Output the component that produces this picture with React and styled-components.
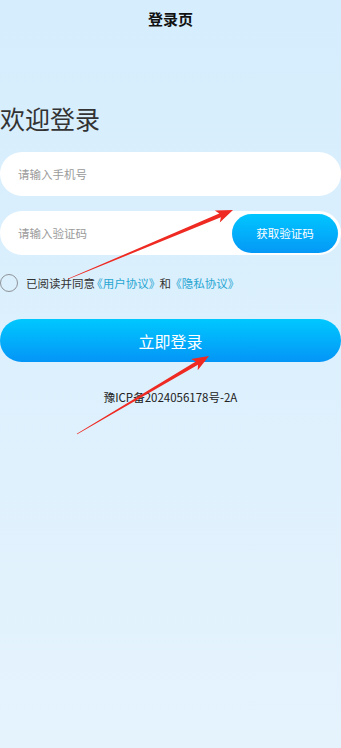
import React from "react";
import styled, { createGlobalStyle } from "styled-components";

const Global = createGlobalStyle`
  html, body { margin: 0; padding: 0; }
  body {
    font-family: "Noto Sans CJK SC", "Noto Sans", sans-serif;
    background: #dff0fd;
  }
  * { box-sizing: border-box; }
`;

const Page = styled.div`
  position: relative;
  width: 341px;
  min-height: 748px;
  background: linear-gradient(180deg, #d5edfd 0%, #dcf0fd 45%, #e5f3fd 100%);
  overflow: hidden;
`;

const Header = styled.div`
  height: 36px;
  display: flex;
  align-items: center;
  justify-content: center;
  font-size: 15px;
  font-weight: 700;
  color: #111;
`;

const Welcome = styled.h1`
  margin: 68px 0 0;
  font-size: 25px;
  line-height: 28px;
  font-weight: 400;
  color: #333;
`;

const Field = styled.div`
  margin-top: ${(p) => p.$mt}px;
  height: 44px;
  border-radius: 22px;
  background: #fff;
  display: flex;
  align-items: center;
  padding-left: 18px;
  padding-right: 3px;
`;

const Input = styled.input`
  flex: 1;
  min-width: 0;
  border: none;
  outline: none;
  background: transparent;
  padding: 0;
  font-family: inherit;
  font-size: 11.5px;
  color: #333;
  &::placeholder { color: #9a9a9a; }
`;

const CodeButton = styled.button`
  width: 106px;
  height: 39px;
  border: none;
  border-radius: 20px;
  background: linear-gradient(180deg, #00c6ff 0%, #0598f6 100%);
  color: #fff;
  font-family: inherit;
  font-size: 11.5px;
  padding: 0;
`;

const Agree = styled.div`
  margin-top: 18px;
  height: 20px;
  display: flex;
  align-items: center;
  font-size: 11.5px;
  color: #333;
`;

const Circle = styled.span`
  width: 18px;
  height: 18px;
  border: 1px solid #8e9398;
  border-radius: 50%;
  margin-right: 8px;
  flex: none;
`;

const Link = styled.span`
  color: #27a6d2;
  font-feature-settings: "halt";
  margin: 0 2px;
`;

const Gap = styled.span`
  margin: 0 3px;
`;

const LoginButton = styled.button`
  display: block;
  width: 100%;
  margin-top: 26px;
  height: 43px;
  border: none;
  border-radius: 22px;
  background: linear-gradient(180deg, #00c8ff 0%, #0495f6 100%);
  color: #fff;
  font-family: inherit;
  font-size: 16px;
  padding: 0;
`;

const Icp = styled.div`
  margin-top: 27px;
  text-align: center;
  font-size: 11.5px;
  line-height: 16px;
  color: #222;
`;

const Overlay = styled.svg`
  position: absolute;
  left: 0;
  top: 0;
  pointer-events: none;
`;

function arrowPoints(tx, ty, hx, hy) {
  const dx = hx - tx;
  const dy = hy - ty;
  const len = Math.hypot(dx, dy);
  const ux = dx / len;
  const uy = dy / len;
  const nx = -uy;
  const ny = ux;
  const headLen = 17;
  const headW = 6.5;
  const shaftW = 2;
  const bx = hx - ux * headLen;
  const by = hy - uy * headLen;
  const pts = [
    [tx + nx * 0.3, ty + ny * 0.3],
    [bx + nx * shaftW + ux * 3, by + ny * shaftW + uy * 3],
    [bx + nx * headW, by + ny * headW],
    [hx, hy],
    [bx - nx * headW, by - ny * headW],
    [bx - nx * shaftW + ux * 3, by - ny * shaftW + uy * 3],
    [tx - nx * 0.3, ty - ny * 0.3],
  ];
  return pts.map((p) => p.map((v) => v.toFixed(1)).join(",")).join(" ");
}

export default function App() {
  return (
    <Page>
      <Global />
      <Header>登录页</Header>
      <Welcome>欢迎登录</Welcome>
      <Field $mt={20}>
        <Input placeholder="请输入手机号" />
      </Field>
      <Field $mt={15}>
        <Input placeholder="请输入验证码" />
        <CodeButton>获取验证码</CodeButton>
      </Field>
      <Agree>
        <Circle />
        已阅读并同意
        <Link>《用户协议》</Link>
        <Gap>和</Gap>
        <Link>《隐私协议》</Link>
      </Agree>
      <LoginButton>立即登录</LoginButton>
      <Icp>豫ICP备2024056178号-2A</Icp>
      <Overlay width="341" height="748" viewBox="0 0 341 748">
        <polygon points={arrowPoints(68, 279, 233, 210)} fill="#ee2a22" />
        <polygon points={arrowPoints(77, 434, 209, 356)} fill="#ee2a22" />
      </Overlay>
    </Page>
  );
}
